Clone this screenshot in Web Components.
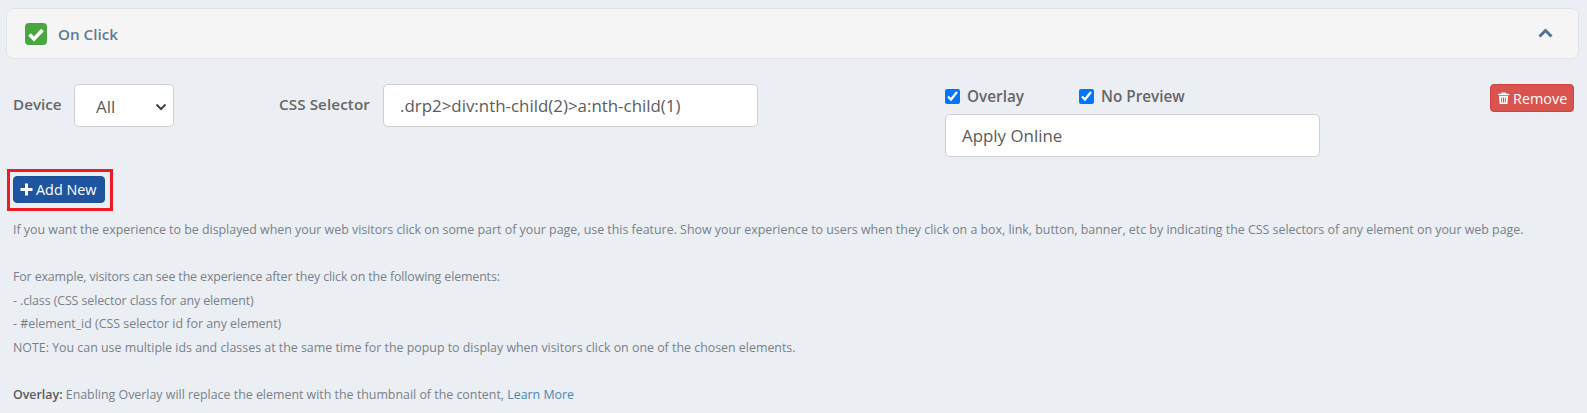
<!DOCTYPE html>
<html>
<head>
<meta charset="utf-8">
<style>
  html, body { margin: 0; background: #ebeef3; }
  body { font-family: "Open Sans", "Noto Sans", sans-serif; width: 1587px; height: 413px; overflow: hidden; }
</style>
</head>
<body>
<trigger-page></trigger-page>

<script>
class TriggerHeader extends HTMLElement {
  constructor() {
    super();
    this.attachShadow({ mode: 'open' }).innerHTML = `
      <style>
        :host {
          display: flex;
          align-items: center;
          height: 49px;
          margin: 8px 8px 0 6px;
          padding: 0 25px 0 18px;
          background: #f5f5f5;
          border: 1px solid #e1e3e6;
          border-radius: 7px;
        }
        .tick { width: 22px; height: 22px; flex-shrink: 0; }
        .title { margin-left: 11px; font-size: 15.2px; font-weight: 600; color: #5a7a99; flex: 1; }
        .caret { width: 15px; height: 10px; margin-top: -2px; }
      </style>
      <svg class="tick" viewBox="0 0 22 22">
        <rect width="22" height="22" rx="4" fill="#4aa63f"/>
        <path d="M4.5 11.5 9 16 17.5 7" fill="none" stroke="#fff" stroke-width="3.6"/>
      </svg>
      <span class="title"><slot></slot></span>
      <svg class="caret" viewBox="0 0 15 10">
        <path d="M1.5 8.5 7.5 2.5 13.5 8.5" fill="none" stroke="#4f7396" stroke-width="3"/>
      </svg>`;
  }
}
customElements.define('trigger-header', TriggerHeader);

class FormField extends HTMLElement {
  constructor() {
    super();
    this.attachShadow({ mode: 'open' }).innerHTML = `
      <style>
        :host {
          display: flex;
          align-items: center;
          box-sizing: border-box;
          height: 43px;
          padding: 0 16px;
          background: #fff;
          border: 1px solid #ced0d4;
          border-radius: 5px;
          font-size: 16.9px;
          color: #5c5c5c;
          white-space: nowrap;
        }
        :host([select]) { justify-content: space-between; padding: 2px 6px 0 21px; }
        svg { width: 12px; height: 8px; display: none; }
        :host([select]) svg { display: block; }
      </style>
      <span><slot></slot></span>
      <svg viewBox="0 0 12 8"><path d="M1.5 1.5 6 6 10.5 1.5" fill="none" stroke="#444" stroke-width="2"/></svg>`;
  }
}
customElements.define('form-field', FormField);

class CheckLabel extends HTMLElement {
  constructor() {
    super();
    this.attachShadow({ mode: 'open' }).innerHTML = `
      <style>
        :host {
          display: inline-flex;
          align-items: center;
          gap: 7px;
          font-size: 15.3px;
          font-weight: 600;
          color: #666;
        }
        input { width: 15px; height: 15px; margin: 0; accent-color: #0075ff; }
      </style>
      <input type="checkbox" checked>
      <span><slot></slot></span>`;
  }
}
customElements.define('check-label', CheckLabel);

class ActionButton extends HTMLElement {
  constructor() {
    super();
    const icons = {
      plus: '<path d="M5 0.5h3v4.5h4.5v3h-4.5v4.5h-3v-4.5h-4.5v-3h4.5z" fill="#fff"/>',
      trash: '<path d="M4.5 1.5h4l.7 1.3h3v1.5h-11v-1.5h3zM2 5h9l-.6 8H2.6zM4.2 6.5v5h1v-5zM6 6.5v5h1v-5zM7.8 6.5v5h1v-5z" fill="#fff" fill-rule="evenodd"/>'
    };
    const icon = icons[this.getAttribute('icon')] || '';
    this.attachShadow({ mode: 'open' }).innerHTML = `
      <style>
        :host {
          display: inline-flex;
          align-items: center;
          gap: 3px;
          box-sizing: border-box;
          height: 28px;
          padding: 0 6px;
          border-radius: 4px;
          border: 1px solid #1d4f92;
          background: #1f55a0;
          color: #fff;
          font-size: 14.4px;
          white-space: nowrap;
        }
        :host([danger]) { background: #d9534f; border-color: #d43f3a; }
        :host([icon="plus"]) { height: 27px; padding-right: 7px; }
        svg { width: 13px; height: 14px; flex-shrink: 0; }
      </style>
      <svg viewBox="0 0 13 14">${icon}</svg>
      <span><slot></slot></span>`;
  }
}
customElements.define('action-button', ActionButton);

class HelpText extends HTMLElement {
  constructor() {
    super();
    this.attachShadow({ mode: 'open' }).innerHTML = `
      <style>
        :host {
          display: block;
          margin: 7px 0 0 13px;
          font-size: 12.4px;
          line-height: 23.5px;
          color: #78818a;
          white-space: nowrap;
        }
      </style>
      <slot></slot>`;
  }
}
customElements.define('help-text', HelpText);

class TriggerPage extends HTMLElement {
  constructor() {
    super();
    this.attachShadow({ mode: 'open' }).innerHTML = `
      <style>
        :host { display: block; }
        .row {
          display: grid;
          grid-template-columns: 272px 666px 545px 84px;
          margin: 25px 0 0 0;
          padding-left: 7px;
          height: 77px;
        }
        .inline { display: flex; align-items: center; height: 43px; }
        .label { font-size: 15.2px; font-weight: 600; color: #666; margin-top: -3px; }
        .device .label { margin-left: 6px; width: 61px; }
        .device form-field { width: 100px; }
        .css .label { width: 104px; letter-spacing: .1px; }
        .css form-field { width: 375px; }
        .checks { display: flex; gap: 55px; height: 24px; margin-bottom: 6px; align-items: center; }
        .extra form-field { width: 375px; }
        .add {
          display: flex;
          width: fit-content;
          box-sizing: border-box;
          margin: 8px 0 0 7px;
          padding: 4px 5px 5px 3px;
          border: 3px solid #ed1c24;
          height: 42px;
        }
        .tight { letter-spacing: -.125px; }
        .tighter { letter-spacing: -.09px; }
        b { font-weight: 600; color: #5c5c5c; }
        a { color: #4a86b8; text-decoration: none; }
      </style>
      <trigger-header>On Click</trigger-header>
      <div class="row">
        <div class="inline device"><span class="label">Device</span><form-field select>All</form-field></div>
        <div class="inline css"><span class="label">CSS Selector</span><form-field>.drp2&gt;div:nth-child(2)&gt;a:nth-child(1)</form-field></div>
        <div class="extra">
          <div class="checks"><check-label>Overlay</check-label><check-label>No Preview</check-label></div>
          <form-field>Apply Online</form-field>
        </div>
        <div><action-button danger icon="trash">Remove</action-button></div>
      </div>
      <div class="add"><action-button icon="plus">Add New</action-button></div>
      <help-text>
        If you want the experience to be displayed when your web visitors click on some part of your page, use this feature. Show your experience to users when they click on a box, link, button, banner, etc by indicating the CSS selectors of any element on your web page.<br>
        <br>
        <span class="tight">For example, visitors can see the experience after they click on the following elements:</span><br>
        <span class="tighter">- .class (CSS selector class for any element)</span><br>
        - #element_id (CSS selector id for any element)<br>
        NOTE: You can use multiple ids and classes at the same time for the popup to display when visitors click on one of the chosen elements.<br>
        <br>
        <b>Overlay:</b> Enabling Overlay will replace the element with the thumbnail of the content, <a href="#">Learn More</a>
      </help-text>`;
  }
}
customElements.define('trigger-page', TriggerPage);
</script>
</body>
</html>
